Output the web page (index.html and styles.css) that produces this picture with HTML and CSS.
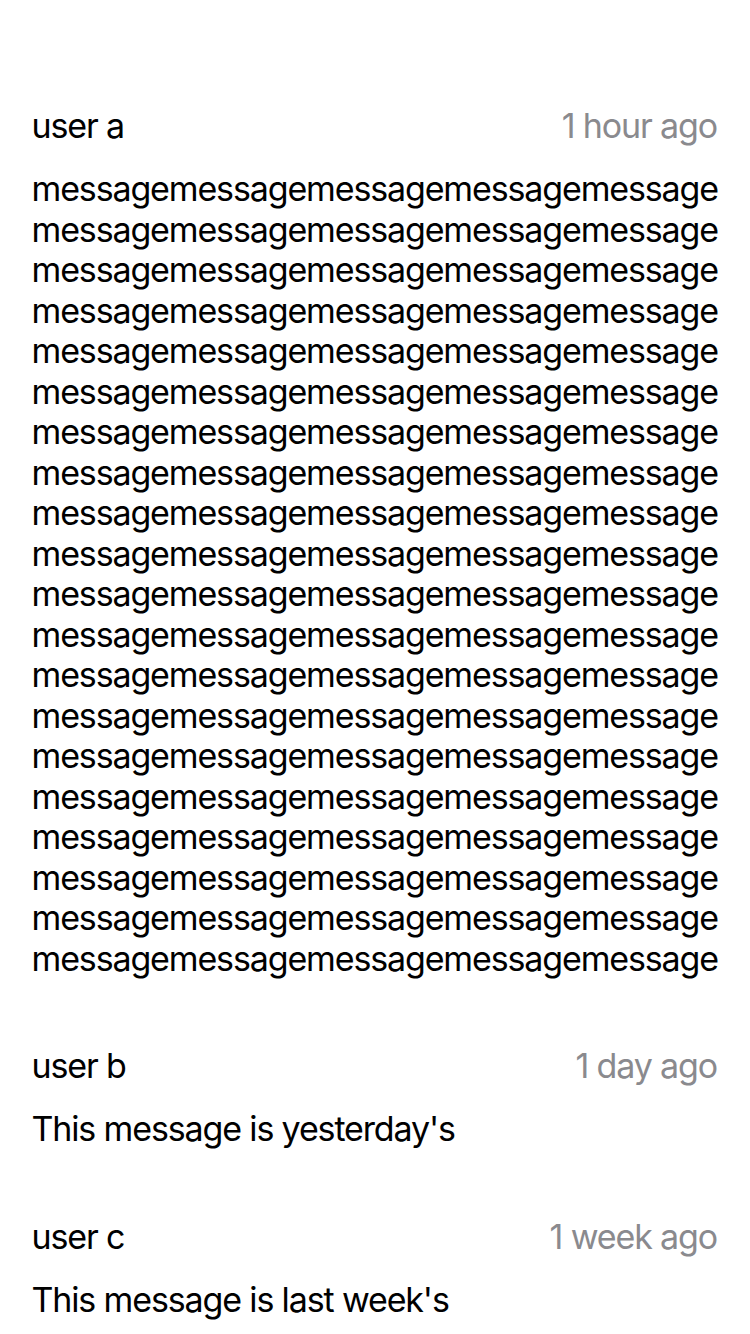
FILE: index.html
```html
<!DOCTYPE html>
<html lang="en">
<head>
<meta charset="utf-8">
<title>Messages</title>
<link rel="stylesheet" href="styles.css">
</head>
<body>
<main class="list">
  <article class="item">
    <header class="item-head">
      <span class="user">user a</span>
      <span class="time">1 hour ago</span>
    </header>
    <p class="body">messagemessagemessagemessagemessage messagemessagemessagemessagemessage messagemessagemessagemessagemessage messagemessagemessagemessagemessage messagemessagemessagemessagemessage messagemessagemessagemessagemessage messagemessagemessagemessagemessage messagemessagemessagemessagemessage messagemessagemessagemessagemessage messagemessagemessagemessagemessage messagemessagemessagemessagemessage messagemessagemessagemessagemessage messagemessagemessagemessagemessage messagemessagemessagemessagemessage messagemessagemessagemessagemessage messagemessagemessagemessagemessage messagemessagemessagemessagemessage messagemessagemessagemessagemessage messagemessagemessagemessagemessage messagemessagemessagemessagemessage</p>
  </article>
  <article class="item">
    <header class="item-head">
      <span class="user">user b</span>
      <span class="time">1 day ago</span>
    </header>
    <p class="body">This message is yesterday's</p>
  </article>
  <article class="item">
    <header class="item-head">
      <span class="user">user c</span>
      <span class="time">1 week ago</span>
    </header>
    <p class="body">This message is last week's</p>
  </article>
</main>
</body>
</html>
```

FILE: styles.css
```css
html, body {
  margin: 0;
  padding: 0;
  background: #ffffff;
}

body {
  font-family: Inter, "Noto Sans", "Liberation Sans", sans-serif;
  font-size: 34px;
  line-height: 40.5px;
  letter-spacing: -1.14px;
  color: #000000;
  -webkit-font-smoothing: antialiased;
}

.list {
  display: flex;
  flex-direction: column;
  gap: 67px;
  padding: 106px 33px 0 31.5px;
}

.item {
  display: flex;
  flex-direction: column;
  gap: 22.5px;
}

.item-head {
  display: flex;
  justify-content: space-between;
  align-items: baseline;
}

.user {
  color: #000000;
}

.time {
  color: #8a8a8e;
}

.body {
  margin: 0;
  word-break: normal;
}
```
